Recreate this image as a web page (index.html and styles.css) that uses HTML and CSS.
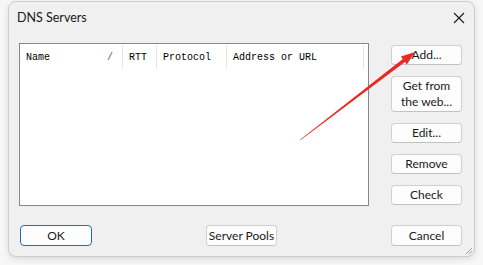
FILE: index.html
```html
<!DOCTYPE html>
<html lang="en">
<head>
  <meta charset="UTF-8">
  <meta name="viewport" content="width=device-width, initial-scale=1.0">
  <link rel="stylesheet" href="styles.css">
</head>
<body>
  <div class="window">
    <div class="titlebar">
      <span class="title">DNS Servers</span>
      <svg class="close" width="12" height="12" viewBox="0 0 12 12">
        <path d="M1 1 L11 11 M11 1 L1 11" stroke="#1a1a1a" stroke-width="1.1" fill="none"/>
      </svg>
    </div>
    <div class="content">
      <div class="main">
        <div class="list">
          <div class="list-head">
            <div class="col col-name">Name<span class="sort">/</span></div>
            <div class="col col-rtt">RTT</div>
            <div class="col col-proto">Protocol</div>
            <div class="col col-addr">Address or URL</div>
          </div>
        </div>
        <div class="side">
          <button class="button">Add...</button>
          <button class="button tall">Get from<br>the web...</button>
          <button class="button">Edit...</button>
          <button class="button">Remove</button>
          <button class="button">Check</button>
        </div>
      </div>
      <div class="bottom">
        <button class="button wide default">OK</button>
        <button class="button wide pools">Server Pools</button>
        <button class="button cancel">Cancel</button>
      </div>
    </div>
    <svg class="grip" width="8" height="8" viewBox="0 0 8 8">
      <path d="M7 1 L1 7 M7 4 L4 7" stroke="#a0a0a0" stroke-width="1" fill="none"/>
    </svg>
  </div>

  <!-- red annotation arrow pointing at Add... -->
  <svg class="arrow" width="483" height="265" viewBox="0 0 483 265">
    <polygon fill="#ea2a22" points="300,140.4 300.4,139.6 402.8,59.1 400.9,56.5 415,52 406.9,64.5 405,61.9"/>
  </svg>
</body>
</html>
```

FILE: styles.css
```css
body {
  margin: 0;
  background-color: #f7f7f7;
  font-family: 'Lato', 'Open Sans', sans-serif;
  font-size: 12px;
  color: #1a1a1a;
  position: relative;
  width: 483px;
  height: 265px;
  overflow: hidden;
}
.window {
  position: relative;
  margin: 1px 0 0 8px;
  width: 465px;
  height: 254px;
  border: 1px solid #cdcdcd;
  border-radius: 8px;
  background-color: #f0f0f0;
  box-shadow: 0px 2px 6px rgba(0, 0, 0, 0.12);
}
.titlebar {
  height: 29px;
  display: flex;
  align-items: center;
  padding-left: 8px;
  padding-right: 9px;
  justify-content: space-between;
  margin-top: 1px;
}
.title {
  font-size: 12.5px;
}
.close {
  display: block;
}
.content {
  padding: 11px 12px 0 10px;
}
.main {
  display: flex;
}
.list {
  width: 348px;
  height: 161px;
  border: 1px solid #828790;
  background-color: #ffffff;
}
.list-head {
  display: flex;
  height: 25px;
  font-family: 'Liberation Mono', monospace;
  font-size: 10px;
  color: #000000;
}
.col {
  display: flex;
  align-items: center;
  padding-left: 6px;
  box-sizing: border-box;
  margin-top: 1px;
  border-right: 1px solid #e5e5e5;
}
.col-name {
  width: 103px;
}
.sort {
  margin-left: 57px;
  color: #555555;
}
.col-rtt {
  width: 34px;
}
.col-proto {
  width: 70px;
}
.col-addr {
  width: 137px;
}
.side {
  display: flex;
  flex-direction: column;
  gap: 11px;
  margin-left: 22px;
  margin-top: 2px;
}
.button {
  width: 71px;
  height: 20px;
  padding: 0;
  font-family: 'Lato', 'Open Sans', sans-serif;
  font-size: 12px;
  color: #1a1a1a;
  background-color: #fdfdfd;
  border: 1px solid #d0d0d0;
  border-bottom-color: #c2c2c2;
  border-radius: 4px;
  line-height: 16px;
  white-space: nowrap;
}
.tall {
  height: 36px;
}
.bottom {
  display: flex;
  margin-top: 19px;
}
.bottom .button {
  height: 21px;
}
.wide {
  width: 72px;
}
.default {
  margin-left: 1px;
  border: 1px solid #1a6ec4;
}
.pools {
  margin-left: 114px;
  width: 71px;
}
.cancel {
  margin-left: auto;
}
.grip {
  position: absolute;
  right: 1px;
  bottom: 1px;
}
.arrow {
  position: absolute;
  left: 0;
  top: 0;
  pointer-events: none;
}
```
